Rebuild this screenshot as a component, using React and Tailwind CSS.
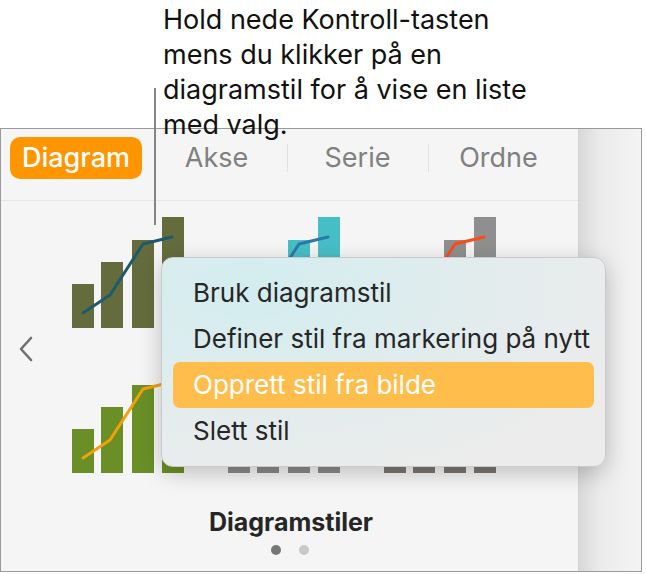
import React from 'react';

const BARS = [
  [0, 44],
  [29, 66],
  [60, 88],
  [90, 111],
];

const CHARTS = [
  { bar: '#646c3d', line: '#1f5a6b' },
  { bar: '#47bec6', line: '#2a7aa8' },
  { bar: '#8f8f8f', line: '#ff4a1c' },
  { bar: '#6a8f27', line: '#f2a108' },
  { bar: '#8a8a8a', line: '#5b5b5b' },
  { bar: '#7c7671', line: '#c4462a' },
];

/**
 * Miniatyr av en diagramstil: fire stolper og en linje
 */
function StyleChart({ bar, line }) {
  return (
    <svg width="112" height="111" viewBox="0 0 112 111">
      {BARS.map(([x, h]) => (
        <rect key={x} x={x} y={111 - h} width="22" height={h} fill={bar} />
      ))}
      <polyline
        points="11,96 38,78 71,27 100,20"
        fill="none"
        stroke={line}
        strokeWidth="3"
        strokeLinejoin="round"
        strokeLinecap="round"
      />
    </svg>
  );
}

function Tab({ label, divider }) {
  return (
    <div className="flex-1 h-[28px] flex items-center justify-center relative">
      {divider && <span className="absolute left-0 top-0 h-full w-px bg-[#e2e2e2]" />}
      <span className="text-[27px] text-[#808080] leading-none">{label}</span>
    </div>
  );
}

const MENU_ITEMS = [
  'Bruk diagramstil',
  'Definer stil fra markering på nytt',
  'Opprett stil fra bilde',
  'Slett stil',
];

export default function App() {
  return (
    <div className="w-[646px] h-[574px] bg-white relative overflow-hidden font-['Inter','Noto_Sans',sans-serif] text-[#1d1d1d]">
      {/* forklaring */}
      <div className="h-[128px] pl-[163px] relative z-30">
        <p className="text-[27px] leading-[35px] text-[#111] pt-[2px]">
          Hold nede Kontroll-tasten
          <br />
          mens du klikker på en
          <br />
          diagramstil for å vise en liste
          <br />
          med valg.
        </p>
      </div>

      {/* panel */}
      <div className="w-[642px] h-[444px] border border-[#9a9a9a] flex relative z-20">
        <div className="w-[577px] bg-[#f5f5f5] flex flex-col">
          <div className="h-[72px] border-b border-[#e6e6e6] flex items-center px-[9px] pb-[14px] gap-[4px]">
            <div className="w-[132px] h-[42px] rounded-[10px] bg-[#ff9500] flex items-center justify-center">
              <span className="text-[27px] text-white font-medium leading-none">Diagram</span>
            </div>
            <div className="flex-1 flex items-center">
              <Tab label="Akse" />
              <Tab label="Serie" divider />
              <Tab label="Ordne" divider />
            </div>
          </div>

          <div className="flex pt-[16px]">
            <div className="w-[71px] flex items-center pl-[17px] pt-[8px]">
              <svg width="16" height="26" viewBox="0 0 16 26">
                <path d="M13 2 L3 13 L13 24" fill="none" stroke="#6f6f6f" strokeWidth="2.6" strokeLinecap="round" strokeLinejoin="round" />
              </svg>
            </div>
            <div className="grid grid-cols-[112px_112px_112px] gap-x-[44px] gap-y-[34px]">
              {CHARTS.map((c, i) => (
                <StyleChart key={i} bar={c.bar} line={c.line} />
              ))}
            </div>
          </div>

          <div className="flex flex-col items-center mt-[34px]">
            <span className="text-[25px] leading-[30px] font-bold text-[#262626] pl-[3px]">Diagramstiler</span>
            <div className="flex gap-[18px] mt-[8px]">
              <span className="w-[10px] h-[10px] rounded-full bg-[#777]" />
              <span className="w-[10px] h-[10px] rounded-full bg-[#c9c9c9]" />
            </div>
          </div>
        </div>
        <div className="flex-1 border-l border-[#d4d4d4] bg-[linear-gradient(to_right,#d9d9d9,#ebebeb_35%,#f4f4f4)]" />
      </div>

      {/* pekerlinje */}
      <div className="absolute left-[154px] top-[88px] w-[2px] h-[137px] bg-[#858585] z-30" />

      {/* kontekstmeny */}
      <div className="absolute left-[161px] top-[257px] w-[445px] h-[210px] rounded-[12px] border border-[#cacaca] shadow-[0_6px_22px_rgba(0,0,0,0.22)] bg-[radial-gradient(ellipse_at_20%_15%,#d2edef_0%,#e2eced_45%,#ececec_80%)] px-[11px] py-[12px] flex flex-col z-40">
        {MENU_ITEMS.map((item, i) => (
          <div
            key={item}
            className={`h-[46px] flex items-center pl-[20px] rounded-[7px] text-[26px] leading-none ${
              i === 2 ? 'bg-[#ffbd4c] text-white' : 'text-[#262626]'
            }`}
          >
            {item}
          </div>
        ))}
      </div>
    </div>
  );
}
